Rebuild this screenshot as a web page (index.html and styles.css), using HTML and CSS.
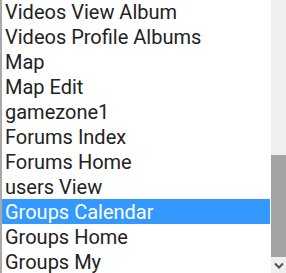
FILE: index.html
```html
<!DOCTYPE html>
<html lang="en">
<head>
    <meta charset="UTF-8">
    <title>Page list</title>
    <link rel="stylesheet" href="styles.css">
</head>
<body>
<div class="listbox">
    <ul class="options">
        <li>Videos View Album</li>
        <li>Videos Profile Albums</li>
        <li>Map</li>
        <li>Map Edit</li>
        <li>gamezone1</li>
        <li>Forums Index</li>
        <li>Forums Home</li>
        <li>users View</li>
        <li class="selected">Groups Calendar</li>
        <li>Groups Home</li>
        <li>Groups My</li>
    </ul>
    <div class="scrollbar">
        <div class="track"></div>
        <div class="thumb"></div>
        <div class="arrow">
            <svg width="10" height="7" viewBox="0 0 10 7">
                <path d="M1 1.5 L5 5.5 L9 1.5" fill="none" stroke="#505050" stroke-width="2"/>
            </svg>
        </div>
    </div>
</div>
</body>
</html>
```

FILE: styles.css
```css
html, body {
    margin: 0;
    padding: 0;
    background: #ffffff;
}

.listbox {
    display: flex;
    width: 286px;
    height: 273px;
    overflow: hidden;
    border-left: 2px solid #a9a9a9;
    box-sizing: border-box;
    font-family: Roboto, "Liberation Sans", sans-serif;
    font-size: 20px;
    color: #222222;
}

.options {
    flex: 1;
    list-style: none;
    margin: -1px 0 0 0;
    padding: 0;
}

.options li {
    height: 24px;
    padding-top: 1px;
    line-height: 25px;
    padding-left: 3px;
    margin-right: 1px;
    white-space: nowrap;
}

.options li.selected {
    background-color: #3399ff;
    color: #ffffff;
}

.scrollbar {
    width: 15px;
    display: flex;
    flex-direction: column;
    background-color: #f0f0f0;
}

.track {
    height: 155px;
}

.thumb {
    flex: 1;
    background-color: #a3a3a3;
}

.arrow {
    height: 16px;
    display: flex;
    align-items: center;
    justify-content: center;
}
```
